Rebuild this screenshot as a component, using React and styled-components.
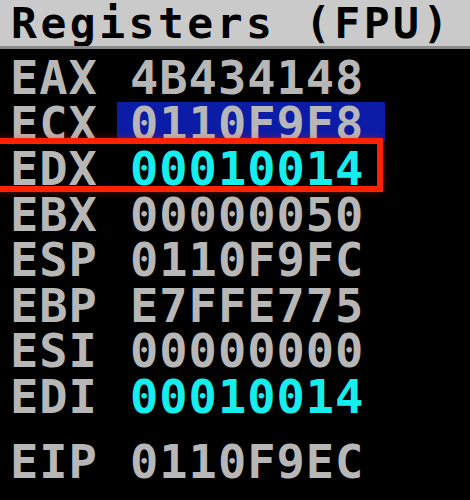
import React from "react";
import styled, { createGlobalStyle } from "styled-components";

const GlobalStyle = createGlobalStyle`
  html, body {
    margin: 0;
    padding: 0;
    background: #000;
  }
`;

const Panel = styled.div`
  width: 470px;
  height: 500px;
  overflow: hidden;
  background: #000;
  font-family: "DejaVu Sans Mono", "Liberation Mono", monospace;
  font-weight: bold;
  font-size: 47px;
  letter-spacing: 1px;
`;

const Title = styled.div`
  height: 46px;
  line-height: 46px;
  padding-left: 11px;
  font-size: 43px;
  letter-spacing: 3.5px;
  background: #cacaca;
  border-bottom: 3px solid #8a8a8a;
  color: #000;
  white-space: pre;
  overflow: hidden;
`;

const List = styled.div`
  padding-top: 6px;
`;

const Row = styled.div`
  position: relative;
  display: flex;
  height: 45.5px;
  line-height: 45.5px;
  padding-left: 10px;
  margin-top: ${(p) => (p.$gap ? "19.5px" : "0")};
  white-space: pre;

  ${(p) =>
    p.$marked &&
    `
    &::after {
      content: "";
      position: absolute;
      left: -6px;
      top: -8px;
      width: 377px;
      height: 42px;
      border: 6px solid #ff2200;
      box-shadow: 0 0 8px rgba(255, 40, 0, 0.35);
      pointer-events: none;
    }
  `}
`;

const Name = styled.span`
  width: 107px;
  color: #b7b7b7;
`;

const Value = styled.span`
  width: 255px;
  padding-left: 13px;
  color: ${(p) => (p.$changed ? "#16eeee" : "#b7b7b7")};
  background: ${(p) =>
    p.$selected
      ? "linear-gradient(#0b1ca6, #0b1ca6) 0 1px / 100% 40px no-repeat"
      : "none"};
`;

const registers = [
  { name: "EAX", value: "4B434148" },
  { name: "ECX", value: "0110F9F8", selected: true },
  { name: "EDX", value: "00010014", changed: true, marked: true },
  { name: "EBX", value: "00000050" },
  { name: "ESP", value: "0110F9FC" },
  { name: "EBP", value: "E7FFE775" },
  { name: "ESI", value: "00000000" },
  { name: "EDI", value: "00010014", changed: true },
  { name: "EIP", value: "0110F9EC", gap: true },
];

export default function App() {
  return (
    <>
      <GlobalStyle />
      <Panel>
        <Title>Registers (FPU)</Title>
        <List>
          {registers.map((r) => (
            <Row key={r.name} $marked={r.marked} $gap={r.gap}>
              <Name>{r.name}</Name>
              <Value $changed={r.changed} $selected={r.selected}>
                {r.value}
              </Value>
            </Row>
          ))}
        </List>
      </Panel>
    </>
  );
}
